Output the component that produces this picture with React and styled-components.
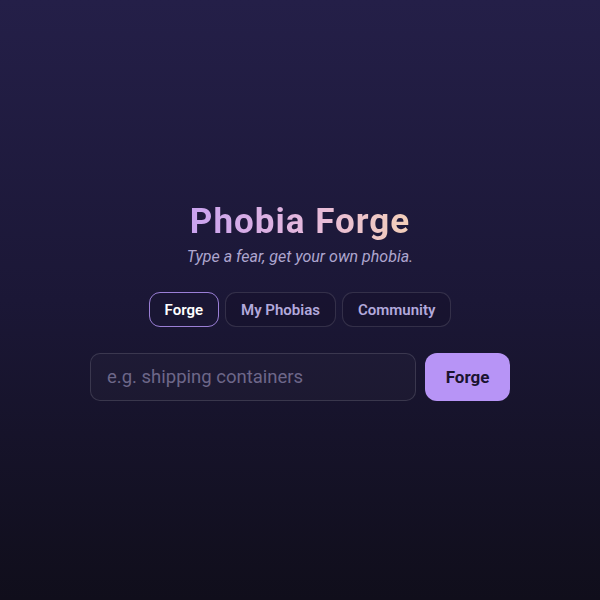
import React, { useState } from "react";
import styled, { createGlobalStyle } from "styled-components";

const Global = createGlobalStyle`
  html, body { margin: 0; padding: 0; height: 100%; }
  body {
    font-family: Roboto, "Liberation Sans", sans-serif;
    background: linear-gradient(180deg, #241f48 0%, #1b1736 50%, #100e1b 100%);
    min-height: 100vh;
  }
  #root { min-height: 100vh; }
`;

const Page = styled.div`
  min-height: 100vh;
  display: flex;
  flex-direction: column;
  align-items: center;
  justify-content: center;
  padding-top: 2px;
  box-sizing: border-box;
`;

const Title = styled.h1`
  margin: 0;
  font-size: 35px;
  font-weight: 700;
  letter-spacing: 1px;
  line-height: 1.2;
  background: linear-gradient(90deg, #c9a2ef 0%, #e6b9dc 55%, #f3cfb9 100%);
  -webkit-background-clip: text;
  background-clip: text;
  color: transparent;
`;

const Subtitle = styled.p`
  margin: 4px 0 0;
  font-size: 16px;
  font-style: italic;
  color: #aea6cf;
`;

const Tabs = styled.div`
  display: flex;
  gap: 6px;
  margin-top: 26px;
`;

const Tab = styled.button`
  height: 35px;
  padding: 0 15px;
  border-radius: 11px;
  font-family: inherit;
  font-size: 15px;
  font-weight: 600;
  cursor: pointer;
  border: 1px solid ${p => (p.$active ? "#9b7fd6" : "rgba(255,255,255,0.12)")};
  background: ${p => (p.$active ? "#1a1634" : "rgba(20,16,40,0.4)")};
  color: ${p => (p.$active ? "#ffffff" : "#b3a9dc")};
`;

const Row = styled.div`
  display: flex;
  gap: 9px;
  margin-top: 26px;
  width: 420px;
`;

const Input = styled.input`
  flex: 1;
  height: 48px;
  box-sizing: border-box;
  padding: 0 16px;
  border-radius: 10px;
  border: 1px solid rgba(255,255,255,0.13);
  background: rgba(255,255,255,0.025);
  color: #fff;
  font-family: inherit;
  font-size: 18.5px;
  outline: none;
  &::placeholder { color: #6d6789; }
`;

const Button = styled.button`
  width: 85px;
  height: 48px;
  border: none;
  border-radius: 12px;
  background: #b794f6;
  color: #1b1430;
  font-family: inherit;
  font-size: 17px;
  font-weight: 700;
  cursor: pointer;
`;

export default function App() {
  const [tab, setTab] = useState("Forge");
  return (
    <>
      <Global />
      <Page>
        <Title>Phobia Forge</Title>
        <Subtitle>Type a fear, get your own phobia.</Subtitle>
        <Tabs>
          {["Forge", "My Phobias", "Community"].map(t => (
            <Tab key={t} $active={tab === t} onClick={() => setTab(t)}>{t}</Tab>
          ))}
        </Tabs>
        <Row>
          <Input placeholder="e.g. shipping containers" />
          <Button>Forge</Button>
        </Row>
      </Page>
    </>
  );
}
